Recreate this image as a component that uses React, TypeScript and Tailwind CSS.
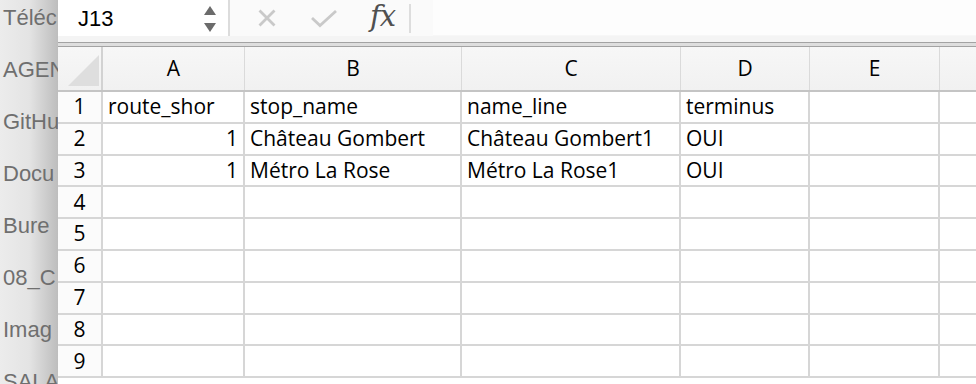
import { useState } from "react";

const sideItems = ["Téléc", "AGEN", "GitHu", "Docu", "Bure", "08_C", "Imag", "SALA"];

const cols = [
  { key: "A", w: "w-[142px]" },
  { key: "B", w: "w-[217px]" },
  { key: "C", w: "w-[219px]" },
  { key: "D", w: "w-[129px]" },
  { key: "E", w: "w-[130px]" },
  { key: "", w: "w-[60px]" },
];

type Cell = { text: string; right?: boolean };

const data: Cell[][] = [
  [{ text: "route_shor" }, { text: "stop_name" }, { text: "name_line" }, { text: "terminus" }],
  [{ text: "1", right: true }, { text: "Château Gombert" }, { text: "Château Gombert1" }, { text: "OUI" }],
  [{ text: "1", right: true }, { text: "Métro La Rose" }, { text: "Métro La Rose1" }, { text: "OUI" }],
];

function Toolbar() {
  const [ref] = useState("J13");

  return (
    <div className="flex h-[36px] bg-[#f7f7f7]">
      {/* name box */}
      <div className="flex w-[170px] items-center bg-white pl-[20px] pr-[12px]">
        <span className="flex-1 text-[22px] text-black font-['Liberation_Sans',sans-serif]">{ref}</span>
        <div className="flex flex-col items-center gap-[8px] pt-[1px]">
          <svg width="12" height="9" viewBox="0 0 12 9">
            <path d="M6 0 L12 9 L0 9 Z" fill="#6b6b6b" />
          </svg>
          <svg width="12" height="9" viewBox="0 0 12 9">
            <path d="M0 0 L12 0 L6 9 Z" fill="#6b6b6b" />
          </svg>
        </div>
      </div>
      <div className="w-[2px] bg-[#dcdcdc]" />
      <div className="flex w-[203px] items-center bg-[#fafafa]">
        <div className="ml-[27px] flex w-[20px] justify-center">
          <svg width="20" height="20" viewBox="0 0 20 20">
            <path d="M2.5 2.5 L17.5 17.5 M17.5 2.5 L2.5 17.5" stroke="#c9c9c9" strokeWidth="2.8" />
          </svg>
        </div>
        <div className="ml-[33px] flex w-[28px] justify-center">
          <svg width="28" height="20" viewBox="0 0 28 20">
            <path d="M2 10 L10 17.5 L26 3" stroke="#c9c9c9" strokeWidth="2.8" fill="none" />
          </svg>
        </div>
        <span className="ml-[32px] pb-[3px] text-[29px] italic leading-none text-[#505050] font-['DejaVu_Serif',serif] tracking-[-1px]">fx</span>
        <div className="ml-[14px] h-[29px] w-[2px] bg-[#dddddd]" />
      </div>
      <div className="h-[35px] flex-1 bg-[#fdfdfd]" />
    </div>
  );
}

function Grid() {
  const rows = Array.from({ length: 9 }, (_, i) => i);

  return (
    <div className="font-['Open_Sans',sans-serif] text-[21px] text-black">
      {/* column header */}
      <div className="flex h-[45px] border-b-2 border-[#c4c4c4] bg-gradient-to-b from-[#f7f7f7] to-[#f1f1f1]">
        <div className="flex w-[45px] shrink-0 items-end border-r-2 border-[#d2d2d2] pb-[4px] pl-[10px]">
          <svg width="31" height="31" viewBox="0 0 31 31">
            <path d="M31 0 L31 31 L0 31 Z" fill="#dedede" />
          </svg>
        </div>
        {cols.map((c, i) => (
          <div key={i} className={`${c.w} flex shrink-0 items-center justify-center border-r border-[#dadada]`}>
            {c.key}
          </div>
        ))}
      </div>
      {rows.map((r) => (
        <div key={r} className="flex h-[31.8px] border-b-2 border-[#d6d6d6]">
          <div className="flex w-[45px] shrink-0 items-center justify-center border-r-2 border-[#d6d6d6] bg-[#fbfbfb]">
            {r + 1}
          </div>
          {cols.map((c, i) => {
            const cell = data[r]?.[i];
            return (
              <div
                key={i}
                className={`${c.w} flex shrink-0 items-center border-r-2 border-[#d6d6d6] px-[5px] ${cell?.right ? "justify-end" : ""}`}
              >
                {cell?.text}
              </div>
            );
          })}
        </div>
      ))}
    </div>
  );
}

export default function App() {
  return (
    <div className="flex h-[384px] w-[976px] overflow-hidden bg-white">
      <aside className="relative w-[58px] shrink-0 overflow-hidden bg-gradient-to-r from-[#ececec] via-[#e4e4e4] to-[#bdbdbd]">
        <ul className="flex flex-col gap-[26px] pl-[3px] pt-[5px] font-['Liberation_Sans',sans-serif] text-[22px] leading-[26px] text-[#6f6f6f] whitespace-nowrap">
          {sideItems.map((s) => (
            <li key={s}>{s}</li>
          ))}
        </ul>
      </aside>
      <main className="flex min-w-0 flex-1 flex-col bg-white">
        <Toolbar />
        <div className="h-[6px] bg-[#f4f4f4]" />
        <div className="h-[5px] border-y border-[#a3a3a3] bg-[#dedede]" />
        <Grid />
      </main>
    </div>
  );
}
